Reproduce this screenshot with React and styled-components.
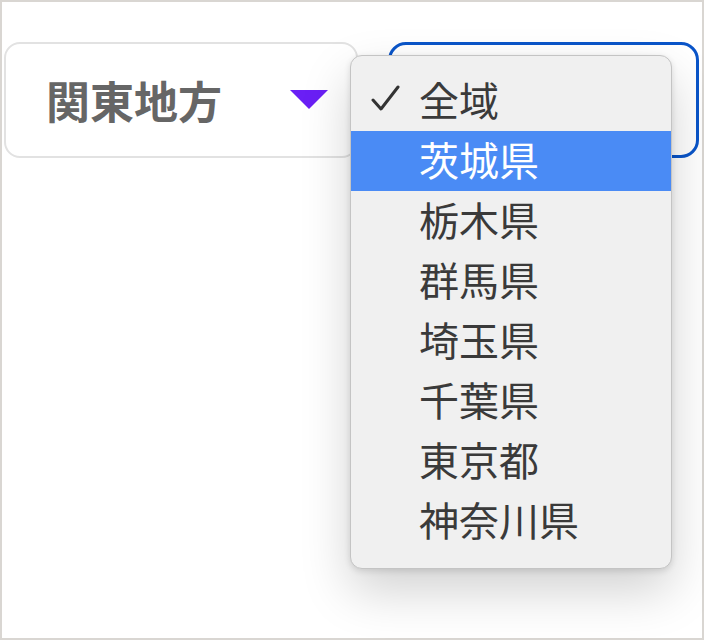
import React from 'react';
import styled, { createGlobalStyle } from 'styled-components';

const GlobalStyle = createGlobalStyle`
  html, body {
    margin: 0;
    padding: 0;
    background: #ffffff;
  }
  body {
    font-family: "Noto Sans CJK JP", "Noto Sans", sans-serif;
  }
`;

const Frame = styled.div`
  position: relative;
  width: 704px;
  height: 640px;
  box-sizing: border-box;
  border: 2px solid #d9d6d2;
  padding: 40px 0 0 2px;
  background: #ffffff;
`;

const Row = styled.div`
  display: flex;
  align-items: flex-start;
  gap: 30px;
`;

const SelectBox = styled.div`
  width: 354px;
  height: 116px;
  box-sizing: border-box;
  border: 2px solid #e2e2e2;
  border-radius: 16px;
  background: #fff;
  display: flex;
  align-items: center;
  justify-content: space-between;
  padding: 0 28px 0 40px;
`;

const SelectLabel = styled.span`
  font-size: 44px;
  font-weight: 700;
  color: #666666;
  line-height: 1;
`;

const Arrow = styled.span`
  width: 0;
  height: 0;
  margin-top: -2px;
  border-left: 19px solid transparent;
  border-right: 19px solid transparent;
  border-top: 19px solid #6a1ff5;
`;

const FocusBox = styled.div`
  width: 311px;
  height: 116px;
  box-sizing: border-box;
  border: 3px solid #0a55c9;
  border-radius: 18px;
`;

const Menu = styled.ul`
  position: absolute;
  left: 348px;
  top: 53px;
  width: 322px;
  margin: 0;
  padding: 15px 0 17px;
  list-style: none;
  box-sizing: border-box;
  background: #f0f0f0;
  border: 1.5px solid #c4c4c4;
  border-radius: 12px;
  box-shadow: 0 22px 50px rgba(0, 0, 0, 0.18), 0 2px 6px rgba(0, 0, 0, 0.12);
`;

const Item = styled.li`
  height: 60px;
  box-sizing: border-box;
  display: flex;
  align-items: center;
  padding: 0 0 4px 20px;
  font-size: 40px;
  line-height: 1;
  color: ${(p) => (p.$active ? '#ffffff' : '#3a3a3a')};
  background: ${(p) => (p.$active ? '#4a8bf5' : 'transparent')};
`;

const CheckSlot = styled.span`
  width: 48px;
  height: 30px;
  display: flex;
  align-items: center;
`;

const items = ['全域', '茨城県', '栃木県', '群馬県', '埼玉県', '千葉県', '東京都', '神奈川県'];

const Check = () => (
  <svg width="30" height="28" viewBox="0 0 30 28">
    <path d="M2 15 L10 24 L27 2" fill="none" stroke="#333" strokeWidth="3" strokeLinecap="round" strokeLinejoin="round" />
  </svg>
);

export default function App() {
  return (
    <>
      <GlobalStyle />
      <Frame>
        <Row>
          <SelectBox>
            <SelectLabel>関東地方</SelectLabel>
            <Arrow />
          </SelectBox>
          <FocusBox />
        </Row>
        <Menu>
          {items.map((name, i) => (
            <Item key={name} $active={i === 1}>
              <CheckSlot>{i === 0 && <Check />}</CheckSlot>
              {name}
            </Item>
          ))}
        </Menu>
      </Frame>
    </>
  );
}
